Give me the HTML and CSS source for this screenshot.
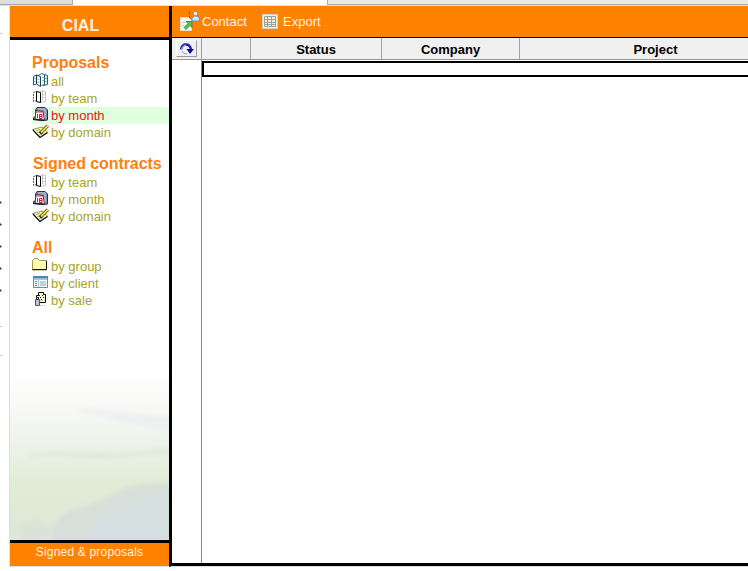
FILE: index.html
```html
<!DOCTYPE html>
<html lang="en">
<head>
<meta charset="utf-8">
<title>CIAL</title>
<link rel="stylesheet" href="styles.css">
</head>
<body>
<svg class="defs" aria-hidden="true">
  <symbol id="i-all" viewBox="0 0 18 16">
    <path d="M11.500 2.500l1-1 3 1v9l-4 1z" fill="#d9f5f7" stroke="#3c5961"/>
    <path d="M6.500 2.500l3-2 3 1v10l-3 1" fill="#e9fbfc" stroke="#3c5961"/>
    <path d="M1.500 3.500l3-1.500v9l-3 1z" fill="#e3fafc" stroke="#3c5961"/>
    <path d="M4.500 2l4 1.500v10l-4-2.500z" fill="#f1feff" stroke="#274048"/>
    <path d="M2 5.500h2M2 8.500h2M5.500 6.500h2M5.500 9.500h2M10 4.500h2M10 7.500h2M13 5.500h2M13 8.500h2" stroke="#76c4ce"/>
  </symbol>
  <symbol id="i-team" viewBox="0 0 18 16">
    <path d="M7.500 2.500l2-2 4 1v10l-5 1M10.500 1v9" fill="#fafafa" stroke="#c4c4c4"/>
    <path d="M11 4.500h2M11 7.500h2" stroke="#d4d4d4"/>
    <path d="M1.500 2.500l3-1v9l-3 1z" fill="#fff" stroke="#555" stroke-dasharray="2 1"/>
    <path d="M4.500 1.500l4 1v10l-4-1z" fill="#fff" stroke="#000"/>
  </symbol>
  <symbol id="i-month" viewBox="0 0 18 16">
    <path d="M3.500 3L5 .5h8L15.500 3v10l-3 .5-11-1v-2l2-1z" fill="#7f91ad" stroke="#27324e"/>
    <path d="M4 3.500l7 1 1.500 8.500L3 12z" fill="#fff" stroke="#6c2430"/>
    <path d="M6 2h7v9" fill="none" stroke="#c1cee2"/>
    <path d="M1 12.500l11 1" stroke="#10131e"/>
    <path d="M4 5h7" stroke="#d2383c"/>
    <path d="M5.500 7v4M7.500 7.500H10v4H7.500zM7.500 9.500H10" fill="none" stroke="#c02030"/>
  </symbol>
  <symbol id="i-domain" viewBox="0 0 18 16">
    <path d="M.5 5.500L10 3l5.500 5-7.500 5.500z" fill="#f4f9bd" stroke="#77794e" stroke-width=".8"/>
    <path d="M1 6l7 7.500L15.500 8.500" fill="none" stroke="#111" stroke-width="1.200"/>
    <path d="M4 6.500l4-1M5.500 8.500l3-1M7.500 10.500l4-1.500" stroke="#7f9a62" stroke-width=".8"/>
    <path d="M8 9.500L15.800 1.700" stroke="#2c2b08" stroke-width="3.200"/>
    <path d="M9 8.500L16 1.500" stroke="#f8e12c" stroke-width="2"/>
  </symbol>
  <symbol id="i-group" viewBox="0 0 18 16">
    <path d="M.5 12V2.500l2-2h3l2 2h7V12z" fill="#fbfbaf" stroke="#9b9955"/>
    <path d="M1.500 3.500h12" stroke="#fffff0"/>
    <path d="M.5 11.500h14V3" fill="none" stroke="#181800"/>
  </symbol>
  <symbol id="i-client" viewBox="0 0 18 16">
    <path d="M1.500 1.500h14v11h-14z" fill="#f7fcff" stroke="#6e8c9b"/>
    <path d="M1 2.500h15" stroke="#3a86b5" stroke-width="2"/>
    <path d="M2 4.500h13M6.500 5v7" stroke="#a5c5d5"/>
    <path d="M8 6h6v5H8z" fill="#bdd5cf"/>
    <path d="M3 6.500h2M3 8.500h2M3 10.500h2" stroke="#657b88"/>
  </symbol>
  <symbol id="i-sale" viewBox="0 0 18 16">
    <path d="M4.500 5.500v-2h2v-3h5v2h2v8h-6" fill="#fafccb" stroke="#000"/>
    <path d="M7 3.500h1M10 3.500h1M8 5.500h1M11 5.500h1M9 7.500h1M6 5.500h1" stroke="#222"/>
    <path d="M3.500 7.500h4v6h-4z" fill="#b7c5da" stroke="#4d5570"/>
    <path d="M4.500 5.500h2v2h-2z" fill="#fff" stroke="#222"/>
    <path d="M8 8.500h5M8 13.500h6" stroke="#bbb" stroke-dasharray="1 1"/>
  </symbol>
</svg>

<div class="tabs"><div class="tab first"></div><div class="tab current"></div><div class="tab rest"></div></div>
<div class="app">
  <div class="gutter">
    <svg width="9" height="565" viewBox="0 6 9 565">
      <path d="M0 33.500h2M0 326.500h2M0 355.500h2" stroke="#c4c4c4"/>
      <path d="M0 201l2 1.500-2 1.500zM0 223l2 1.500-2 1.500zM0 245l2 1.500-2 1.500zM0 267l2 1.500-2 1.500zM0 289l2 1.500-2 1.500z" fill="#444"/>
    </svg>
  </div>
  <aside class="sidebar">
    <header class="brand">CIAL</header>
    <nav class="nav">
      <section>
        <h2>Proposals</h2>
        <a class="item"><svg><use href="#i-all"/></svg>all</a>
        <a class="item"><svg><use href="#i-team"/></svg>by team</a>
        <a class="item active"><svg><use href="#i-month"/></svg>by month</a>
        <a class="item"><svg><use href="#i-domain"/></svg>by domain</a>
      </section>
      <section>
        <h2 class="wide">Signed contracts</h2>
        <a class="item"><svg><use href="#i-team"/></svg>by team</a>
        <a class="item"><svg><use href="#i-month"/></svg>by month</a>
        <a class="item"><svg><use href="#i-domain"/></svg>by domain</a>
      </section>
      <section>
        <h2>All</h2>
        <a class="item"><svg><use href="#i-group"/></svg>by group</a>
        <a class="item"><svg><use href="#i-client"/></svg>by client</a>
        <a class="item"><svg><use href="#i-sale"/></svg>by sale</a>
      </section>
    </nav>
    <svg class="scene" viewBox="0 0 159 170" preserveAspectRatio="none">
      <defs>
        <linearGradient id="field" x1="0" y1="0" x2="0" y2="1">
          <stop offset="0" stop-color="#fff"/><stop offset=".22" stop-color="#f8f9f7"/>
          <stop offset=".45" stop-color="#ecf2e9"/><stop offset=".68" stop-color="#e0ecd5"/>
          <stop offset="1" stop-color="#dce8d8"/>
        </linearGradient>
        <filter id="soft" x="-20%" y="-20%" width="140%" height="140%"><feGaussianBlur stdDeviation="2.500"/></filter>
      </defs>
      <rect width="159" height="170" fill="url(#field)"/>
      <g filter="url(#soft)">
        <path d="M70 38Q115 42 165 47v15Q120 54 70 42z" fill="#eef0f0"/>
        <path d="M20 84q40-5 70-2t75-6v7q-70 8-95 5T20 88z" fill="#deeadb"/>
        <path d="M42 175q-2-24 16-34 30-6 55-22 26-8 52-5v61z" fill="#d6dfd9"/>
        <path d="M75 175q-2-23 35-35 25-12 55-13v48z" fill="#d5dfe0"/>
        <path d="M10 155l18-5 16 10-10 10H12z" fill="#d9e3d8"/>
      </g>
    </svg>
    <footer class="caption">Signed &amp; proposals</footer>
  </aside>
  <main class="main">
    <div class="toolbar">
      <a class="action contact">
        <svg width="22" height="24" viewBox="0 0 22 24">
          <path d="M1.500 7.500h8l3 3v10h-11z" fill="#f8faf7" stroke="#dde2d6"/>
          <path d="M3 12.500h3M3 15.500h2" stroke="#c5cbc3"/>
          <path d="M5 17.500l4-4-2-2h6v6l-2-2-4 4z" fill="#55c252" stroke="#2c8a31" stroke-width=".8"/>
          <path d="M10.500 1v4M10.500 6v2" stroke="#8a5a30"/>
          <path d="M13 11V8l2-2h3l2.500 2v3z" fill="#d3e7fb" stroke="#6b8fbd"/>
          <circle cx="16.500" cy="3.500" r="2.300" fill="#e7f3ff" stroke="#6b8fbd"/>
        </svg><span>Contact</span></a>
      <a class="action export">
        <svg width="16" height="15" viewBox="0 0 16 15">
          <path d="M.5 .5h15v14H.5z" fill="#f3eee2" stroke="#d9d0c3"/>
          <path d="M2.500 2.500h11v10h-11zM5.500 2v11M9.500 2v11M2 5.500h12M2 8.500h12M2 10.500h12" fill="none" stroke="#a09f99"/>
        </svg><span>Export</span></a>
    </div>
    <div class="grid-head">
      <div class="cell refresh"><span class="refresh-button">
        <svg width="16" height="14" viewBox="0 0 16 14">
          <path d="M2 7.500Q3 2.500 7 2.500t5 5" fill="none" stroke="#2020a0" stroke-width="2.400"/>
          <path d="M2 8Q3 3.500 7 3" fill="none" stroke="#9ab7ee"/>
          <path d="M7.500 7H15l-4 5z" fill="#101090"/>
          <path d="M3 9q1 3 5 3" fill="none" stroke="#9a9aca"/>
        </svg></span></div>
      <div class="cell"></div>
      <div class="cell">Status</div>
      <div class="cell">Company</div>
      <div class="cell project">Project</div>
    </div>
    <div class="grid-body"><div class="marker"></div><div class="rows"><div class="selected-row"></div></div></div>
  </main>
</div>
</body>
</html>
```
FILE: styles.css
```css
* { box-sizing: border-box; }
body {
  margin: 0;
  width: 748px;
  height: 571px;
  overflow: hidden;
  background: #fff;
  font: 13px "Liberation Sans", Arial, sans-serif;
}
svg { display: block; flex: none; }
.defs { display: none; }

.tabs { display: flex; height: 6px; border-bottom: 1px solid #e3e0dc; }
.tab { height: 5px; border-bottom: 1px solid #a5a9ac; background: #dedede; }
.first { width: 73px; border-right: 1px solid #aaa; }
.current { width: 254px; background: #fff; border-color: #fff; }
.rest { flex: 1; background: #e9e9e9; border-left: 1px solid #aaa; }

.app { display: grid; grid-template-columns: 9px 160px 1fr; height: 561px; }
.gutter { height: 561px; overflow: hidden; }
.sidebar { display: flex; flex-direction: column; height: 561px; border-left: 1px solid #ddd; border-bottom: 1px solid #ddd; }
.brand {
  height: 34px;
  padding-right: 18px;
  border-bottom: 3px solid #000;
  background: #ff8200;
  color: #fff3e3;
  font-size: 16px;
  font-weight: bold;
  line-height: 39px;
  text-align: center;
}
.nav { display: flex; flex-direction: column; gap: 12px; height: 330px; padding: 12px 0 0 22px; }
.nav h2 { margin: 0; height: 21px; color: #ff800f; font-size: 16px; line-height: 21px; white-space: nowrap; }
.nav .wide { padding-left: 1px; letter-spacing: -0.08px; }
.item { display: flex; height: 17px; color: #a5a51e; line-height: 18px; }
.item svg { width: 18px; height: 16px; margin-right: 1px; }
.active { background: #e0ffe0; color: #e8140f; }
.scene { width: 159px; height: 170px; }
.caption {
  height: 26px;
  border-top: 3px solid #000;
  background: #ff8200;
  color: #fff3e3;
  font-size: 12px;
  letter-spacing: 0.18px;
  line-height: 18px;
  text-align: center;
}

.main { display: flex; flex-direction: column; height: 561px; min-width: 0; border-left: 3px solid #000; border-bottom: 1px solid #ddd; }
.toolbar { display: flex; height: 32px; padding-left: 7px; border-bottom: 1px solid #000; background: #ff8200; color: #fff3e3; line-height: 31px; }
.action { display: flex; }
.contact { width: 83px; }
.contact svg { margin: 4px 1px 0 0; }
.export svg { margin: 8px 5px 0 0; }
.grid-head {
  display: grid;
  grid-template: 21px / 30px 49px 131px 138px 1fr;
  height: 22px;
  border-bottom: 1px solid #999;
  background: #f0f0f0;
  font-weight: bold;
  line-height: 23px;
  text-align: center;
}
.cell { border-right: 1px solid #a0a0a0; }
.project { padding-left: 43px; border-right: 0; }
.refresh { padding: 2px 4px; }
.refresh-button { display: flex; align-items: center; justify-content: center; width: 21px; height: 17px; border: 1px solid #fff; border-right-color: #999; border-bottom-color: #999; }
.grid-body { display: flex; flex: 1; border-bottom: 3px solid #000; }
.marker { width: 30px; border-right: 1px solid #888; }
.rows { flex: 1; padding-top: 1px; }
.selected-row { height: 16px; border: 2px solid #000; border-right: 0; }
```
